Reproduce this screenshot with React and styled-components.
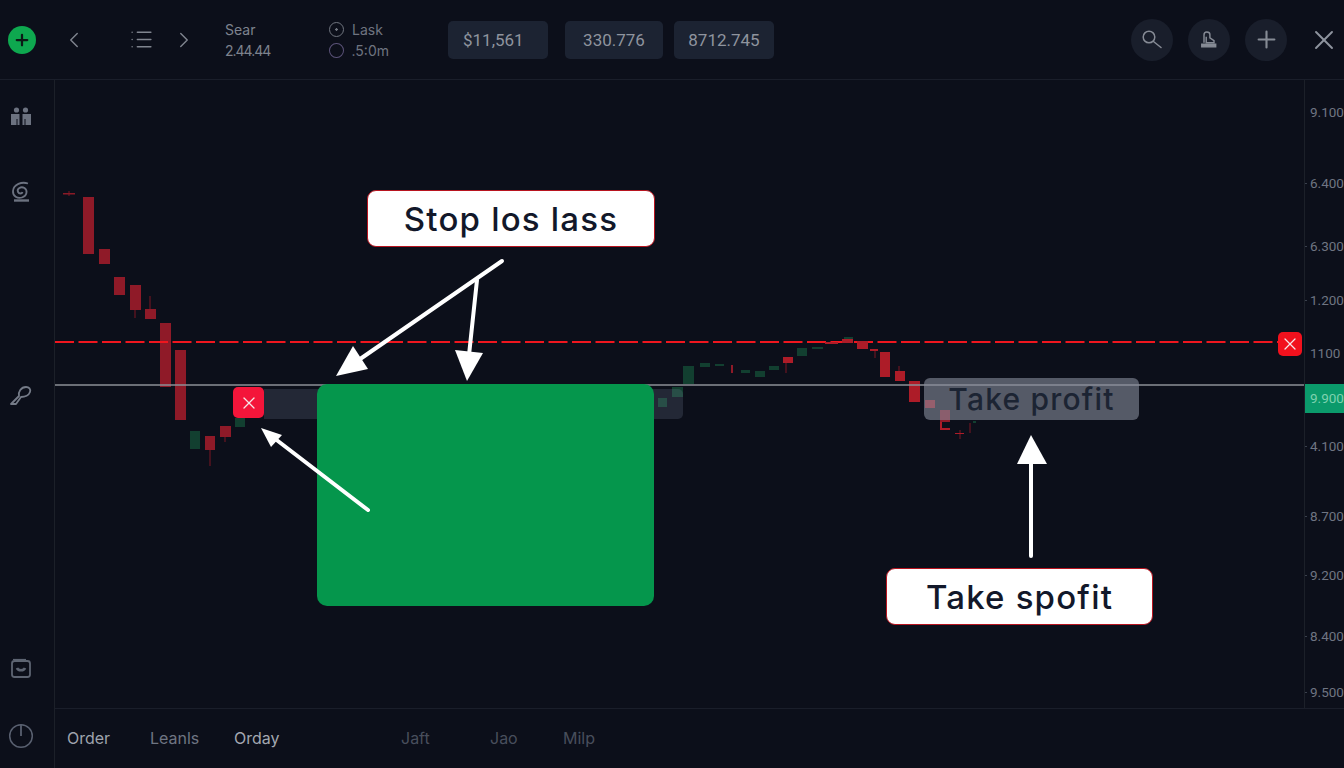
import React from 'react'
import styled, { createGlobalStyle } from 'styled-components'
import { ChevronLeft, ChevronRight, List, Plus, X } from 'lucide-react'

const reds = [
  [83, 197, 11, 57], [99, 249, 11, 15], [114, 277, 11, 18], [130, 285, 11, 25],
  [145, 309, 11, 10], [160, 323, 11, 64], [175, 350, 11, 70], [205, 436, 10, 14],
  [220, 426, 11, 11], [731, 365, 2, 8], [940, 410, 10, 12],
]
const brightReds = [
  [783, 357, 10, 6], [842, 339, 11, 4], [857, 341, 11, 8], [870, 349, 8, 2],
  [880, 352, 10, 25], [895, 371, 10, 10], [909, 381, 11, 21], [925, 400, 10, 8],
  [825, 342, 13, 2], [940, 422, 2, 8], [940, 428, 10, 2], [955, 433, 9, 1],
]
const greens = [
  [190, 431, 10, 18], [235, 418, 10, 9], [658, 398, 9, 9], [672, 387, 11, 10],
  [683, 366, 11, 18], [700, 363, 10, 4], [715, 364, 9, 2], [741, 370, 9, 3],
  [755, 371, 10, 6], [769, 366, 10, 4], [797, 348, 10, 8], [812, 347, 11, 2],
  [844, 337, 9, 2], [973, 421, 3, 2],
]
const wicks = [
  [69, 191, 196], [135, 310, 318], [150, 296, 309], [210, 450, 466], [225, 437, 442],
  [786, 363, 373], [875, 351, 358], [899, 366, 371], [960, 430, 439], [970, 423, 433],
]
const axisLabels = [
  { text: '9.100', gap: 24 }, { text: '6.400', gap: 54, tick: true }, { text: '6.300', gap: 46, tick: true },
  { text: '1.200', gap: 37, tick: true }, { text: '1100', gap: 36 }, { text: '9.900', gap: 22, active: true },
  { text: '4.100', gap: 25, tick: true }, { text: '8.700', gap: 53, tick: true }, { text: '9.200', gap: 42, tick: true },
  { text: '8.400', gap: 44, tick: true }, { text: '9.500', gap: 39, tick: true },
]

const App = () => {
  return (
    <Page>
      <GlobalStyle />
      <TopBar>
        <AddButton><Plus size={18} strokeWidth={3} /></AddButton>
        <NavIcon $left={25}><ChevronLeft size={26} strokeWidth={1.3} /></NavIcon>
        <NavIcon $left={42}><List size={25} strokeWidth={1.4} /></NavIcon>
        <NavIcon $left={17}><ChevronRight size={26} strokeWidth={1.3} /></NavIcon>
        <Stat $left={28} $width={104}>
          <span>Sear</span>
          <Squeezed>2.44.44</Squeezed>
        </Stat>
        <Stat $left={0} $width={60}>
          <StatLine><Ring $dot />Lask</StatLine>
          <StatLine><Ring $violet />.5:0m</StatLine>
        </Stat>
        <Prices>
          <Price $width={100} $mr={17}>$11,561</Price>
          <Price $width={98} $mr={11} $center>330.776</Price>
          <Price $width={100} $center>8712.745</Price>
        </Prices>
        <Actions>
          <RoundButton>
            <svg width="20" height="20" viewBox="0 0 20 20" fill="none" stroke="currentColor" strokeWidth="1.500" strokeLinecap="round">
              <circle cx="7" cy="7" r="5.800" />
              <path d="M11.500 11.500L19 17.500" />
            </svg>
          </RoundButton>
          <RoundButton>
            <svg width="20" height="20" viewBox="0 0 18 18" fill="none" stroke="currentColor" strokeWidth="1.300">
              <path d="M4.500 11.500V4.500C4.500 2.500 5.500 1.800 7 1.800s2.800.7 2.800 2.300V7l3.700 2.500v2H6.500V6" />
              <path d="M2.500 12.800h12.500v2.400H2.500z" fill="currentColor" />
            </svg>
          </RoundButton>
          <RoundButton><Plus size={27} strokeWidth={1.9} /></RoundButton>
          <CloseButton><X size={32} strokeWidth={1.400} /></CloseButton>
        </Actions>
      </TopBar>

      <Body>
        <Rail>
          <RailIcon $top={25}>
            <svg width="22" height="22" viewBox="0 0 22 22" fill="#6c7280">
              <circle cx="6.500" cy="5" r="2.600" />
              <circle cx="15.500" cy="5" r="2.600" />
              <path d="M1 9h8.500v11H7.500v-6h-1v6H1zM12.500 9H21v11h-5.500v-6h-1v6h-2z" />
            </svg>
          </RailIcon>
          <RailIcon $top={53}>
            <svg width="22" height="24" viewBox="0 0 22 24" fill="none" stroke="#6c7280" strokeWidth="1.800">
              <path d="M18 3.500C12 1.500 3.500 4 3 11c-.4 5 4.500 8 9 6.500 5-1.500 6-7 2.500-9.500-3.500-2-8 .5-6.500 4 1 2 4 2 4.500 0" />
              <path d="M4 20.500h15" strokeWidth="2.400" />
            </svg>
          </RailIcon>
          <RailIcon $top={179}>
            <svg width="24" height="24" viewBox="0 0 24 24" fill="none" stroke="#757b88" strokeWidth="1.800">
              <path d="M2 21l8-8c-1-4 2-9 7-9 3 0 5 2 4 5-1 3-5 5-9 5l-5 7z" strokeLinejoin="round" />
            </svg>
          </RailIcon>
          <RailIcon $top="auto">
            <svg width="22" height="22" viewBox="0 0 22 22" fill="none" stroke="#5d6472" strokeWidth="1.800">
              <rect x="2" y="4" width="18" height="16" rx="2.500" />
              <path d="M3 2.500h13" strokeWidth="1.200" />
              <path d="M7 11c1 3 7 3 8 0" strokeWidth="2.600" />
            </svg>
          </RailIcon>
          <RailIcon $top={44} $bottom={19}>
            <svg width="26" height="26" viewBox="0 0 26 26" fill="none" stroke="#596070" strokeWidth="1.500">
              <circle cx="13" cy="13" r="11.300" />
              <path d="M13 1.500V13" strokeWidth="1.800" />
            </svg>
          </RailIcon>
        </Rail>

        <Main>
          <ChartRow>
            <ChartArea>
              <ChartSvg viewBox="55 80 1249 628">
                {wicks.map(([x, y1, y2]) => (
                  <line key={x} x1={x} y1={y1} x2={x} y2={y2} stroke="#7c1622" strokeWidth="1" />
                ))}
                <rect x="63" y="193" width="12" height="1.500" fill="#8a1a26" />
                {reds.map(([x, y, w, h]) => (
                  <rect key={x} x={x} y={y} width={w} height={h} fill="#8f1a28" />
                ))}
                {greens.map(([x, y, w, h]) => (
                  <rect key={x} x={x} y={y} width={w} height={h} fill="#123f30" />
                ))}
                <line x1="55" y1="342" x2="1280" y2="342" stroke="#f0161e" strokeWidth="2" strokeDasharray="19 4.500" />
                {brightReds.map(([x, y, w, h]) => (
                  <rect key={x} x={x} y={y} width={w} height={h} fill="#ad1c28" />
                ))}
                <line x1="55" y1="385" x2="1304" y2="385" stroke="#8d9097" strokeWidth="1.500" />
              </ChartSvg>

              <EntryBar />
              <GreenZone />
              <CloseBadge $left={178} $top={307} $size={31} $color="#f4153a"><X size={20} strokeWidth={1.500} /></CloseBadge>
              <CloseBadge $left={1223} $top={252} $size={24} $color="#f2111d"><X size={20} strokeWidth={1.500} /></CloseBadge>
              <Callout $left={312} $top={110} $width={288}>Stop los lass</Callout>
              <Callout $left={831} $top={488} $width={267}>Take spofit</Callout>
              <GhostLabel>Take profit</GhostLabel>

              <ArrowLayer viewBox="55 80 1249 628">
                <g stroke="#fff" strokeWidth="4" strokeLinecap="round" fill="none">
                  <line x1="502" y1="261" x2="350" y2="366" />
                  <line x1="477" y1="280" x2="469" y2="355" />
                  <line x1="368" y1="510" x2="274" y2="438" />
                  <line x1="1031" y1="556" x2="1031" y2="462" />
                </g>
                <g fill="#fff">
                  <polygon points="336,376 353,346 368,369" />
                  <polygon points="467,381 455,350 483,353" />
                  <polygon points="261,428 282,435 271,447" />
                  <polygon points="1031,435 1017,464 1047,464" />
                </g>
              </ArrowLayer>
            </ChartArea>
            <Axis>
              {axisLabels.map(label => (
                <AxisLabel key={label.text} $gap={label.gap} $active={label.active} $tick={label.tick}>{label.text}</AxisLabel>
              ))}
            </Axis>
          </ChartRow>

          <BottomBar>
            <Tab $width={83} $tone="#9ea3ad">Order</Tab>
            <Tab $width={84} $tone="#6f7582">Leanls</Tab>
            <Tab $width={167} $tone="#a3a8b1">Orday</Tab>
            <Tab $width={89} $tone="#484e5c">Jaft</Tab>
            <Tab $width={73} $tone="#484e5c">Jao</Tab>
            <Tab $tone="#484e5c">Milp</Tab>
          </BottomBar>
        </Main>
      </Body>
    </Page>
  )
}

export default App

const GlobalStyle = createGlobalStyle`
    html, body {
        margin: 0;
        padding: 0;
        background: #0c0f1a;
        overflow: hidden;
    }
`

const Page = styled.div`
    width: 1344px;
    height: 768px;
    display: flex;
    flex-direction: column;
    background: #0c0f1a;
    font-family: Inter, "Liberation Sans", sans-serif;
    color: #9ea3ad;
`

const TopBar = styled.div`
    height: 79px;
    flex-shrink: 0;
    display: flex;
    align-items: center;
    padding-left: 8px;
    border-bottom: 1px solid #1a1e2a;
`

const AddButton = styled.div`
    width: 28px;
    height: 28px;
    border-radius: 50%;
    background: #0ea84f;
    color: #0c1a16;
    display: flex;
    align-items: center;
    justify-content: center;
`

const NavIcon = styled.div`
    margin-left: ${p => p.$left}px;
    color: #80858f;
    display: flex;
`

const Stat = styled.div`
    margin-left: ${p => p.$left}px;
    width: ${p => p.$width}px;
    flex-shrink: 0;
    display: flex;
    flex-direction: column;
    gap: 4px;
    font-size: 14px;
    line-height: 17px;
    color: #7e838e;
`

const Squeezed = styled.span`
    letter-spacing: -1px;
`

const StatLine = styled.span`
    display: flex;
    align-items: center;
    gap: 8px;
    color: #6f7480;
`

const Ring = styled.i`
    width: 13px;
    height: 13px;
    border-radius: 50%;
    border: 1px solid ${p => (p.$violet ? '#5a5278' : '#70757f')};
    background: ${p => (p.$dot ? 'radial-gradient(circle, #70757f 1px, transparent 1.500px)' : 'none')};
`

const Prices = styled.div`
    margin-left: 59px;
    display: flex;
`

const Price = styled.div`
    width: ${p => p.$width}px;
    height: 38px;
    margin-right: ${p => p.$mr || 0}px;
    padding-left: ${p => (p.$center ? 0 : 15)}px;
    box-sizing: border-box;
    display: flex;
    align-items: center;
    justify-content: ${p => (p.$center ? 'center' : 'flex-start')};
    background: #1c2332;
    border-radius: 5px;
    font-family: Roboto, sans-serif;
    font-size: 17px;
    color: #8f949e;
`

const Actions = styled.div`
    margin-left: auto;
    display: flex;
    align-items: center;
    gap: 15px;
    padding-right: 4px;
`

const RoundButton = styled.div`
    width: 42px;
    height: 42px;
    border-radius: 50%;
    background: #191e2b;
    color: #868b95;
    display: flex;
    align-items: center;
    justify-content: center;
`

const CloseButton = styled.div`
    margin-left: 6px;
    color: #8f949e;
    display: flex;
`

const Body = styled.div`
    flex: 1;
    display: flex;
    min-height: 0;
`

const Rail = styled.div`
    width: 55px;
    flex-shrink: 0;
    display: flex;
    flex-direction: column;
    align-items: center;
    padding-right: 12px;
    box-sizing: border-box;
    border-right: 1px solid #1c2029;
`

const RailIcon = styled.div`
    display: flex;
    margin-top: ${p => (p.$top === 'auto' ? 'auto' : `${p.$top}px`)};
    margin-bottom: ${p => p.$bottom || 0}px;
`

const Main = styled.div`
    flex: 1;
    display: flex;
    flex-direction: column;
    min-width: 0;
`

const ChartRow = styled.div`
    height: 628px;
    display: flex;
    border-bottom: 1px solid #1a1e2a;
`

const ChartArea = styled.div`
    position: relative;
    width: 1249px;
    height: 628px;
    flex-shrink: 0;
`

const ChartSvg = styled.svg`
    display: block;
    width: 1249px;
    height: 628px;
`

const ArrowLayer = styled(ChartSvg)`
    position: absolute;
    inset: 0;
`

const EntryBar = styled.div`
    position: absolute;
    left: 209px;
    top: 309px;
    width: 419px;
    height: 30px;
    border-radius: 0 5px 5px 0;
    background: rgba(120, 130, 155, 0.22);
`

const GreenZone = styled.div`
    position: absolute;
    left: 262px;
    top: 304px;
    width: 337px;
    height: 222px;
    border-radius: 10px;
    background: #05964c;
`

const CloseBadge = styled.div`
    position: absolute;
    left: ${p => p.$left}px;
    top: ${p => p.$top}px;
    width: ${p => p.$size}px;
    height: ${p => p.$size}px;
    border-radius: 5px;
    background: ${p => p.$color};
    color: #f6e6e8;
    display: flex;
    align-items: center;
    justify-content: center;
`

const Callout = styled.div`
    position: absolute;
    left: ${p => p.$left}px;
    top: ${p => p.$top}px;
    width: ${p => p.$width}px;
    height: 57px;
    box-sizing: border-box;
    border: 1.500px solid #b8141f;
    border-radius: 9px;
    background: #fff;
    display: flex;
    align-items: center;
    justify-content: center;
    font-size: 33px;
    font-weight: 500;
    letter-spacing: 1.2px;
    color: #12182a;
    white-space: nowrap;
`

const GhostLabel = styled.div`
    position: absolute;
    left: 869px;
    top: 298px;
    width: 215px;
    height: 42px;
    border-radius: 6px;
    background: rgba(135, 140, 155, 0.6);
    display: flex;
    align-items: center;
    justify-content: center;
    font-size: 30px;
    font-weight: 500;
    letter-spacing: 1.2px;
    color: #1c2433;
    white-space: nowrap;
`

const Axis = styled.div`
    flex: 1;
    min-width: 0;
    display: flex;
    flex-direction: column;
    border-left: 1px solid #1c2029;
`

const AxisLabel = styled.div`
    position: relative;
    flex-shrink: 0;
    margin-top: ${p => p.$gap}px;
    height: ${p => (p.$active ? 29 : 17)}px;
    line-height: ${p => (p.$active ? 29 : 17)}px;
    padding-left: 5px;
    font-family: Roboto, sans-serif;
    font-size: 13.5px;
    white-space: nowrap;
    color: ${p => (p.$active ? '#7fd2b0' : '#6f7582')};
    background: ${p => (p.$active ? '#0b9a6b' : 'transparent')};

    &::before {
        content: '';
        display: ${p => (p.$tick ? 'block' : 'none')};
        position: absolute;
        left: 0;
        top: 8px;
        width: 2px;
        height: 1px;
        background: #3a404d;
    }
`

const BottomBar = styled.div`
    flex: 1;
    display: flex;
    align-items: center;
    padding-left: 12px;
    padding-bottom: 2px;
`

const Tab = styled.div`
    width: ${p => (p.$width ? `${p.$width}px` : 'auto')};
    font-size: 16px;
    color: ${p => p.$tone};
`
